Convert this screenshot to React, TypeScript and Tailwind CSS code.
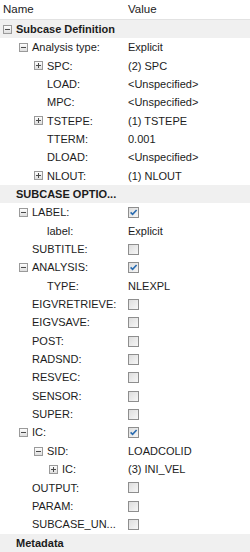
import React from "react";

type Row = {
  name: string;
  level: number;
  toggle?: "open" | "closed";
  value?: string;
  check?: boolean;
  section?: boolean;
};

const rows: Row[] = [
  { name: "Subcase Definition", level: 0, toggle: "open", section: true },
  { name: "Analysis type:", level: 1, toggle: "open", value: "Explicit" },
  { name: "SPC:", level: 2, toggle: "closed", value: "(2) SPC" },
  { name: "LOAD:", level: 2, value: "<Unspecified>" },
  { name: "MPC:", level: 2, value: "<Unspecified>" },
  { name: "TSTEPE:", level: 2, toggle: "closed", value: "(1) TSTEPE" },
  { name: "TTERM:", level: 2, value: "0.001" },
  { name: "DLOAD:", level: 2, value: "<Unspecified>" },
  { name: "NLOUT:", level: 2, toggle: "closed", value: "(1) NLOUT" },
  { name: "SUBCASE OPTIO...", level: 0, section: true },
  { name: "LABEL:", level: 1, toggle: "open", check: true },
  { name: "label:", level: 2, value: "Explicit" },
  { name: "SUBTITLE:", level: 1, check: false },
  { name: "ANALYSIS:", level: 1, toggle: "open", check: true },
  { name: "TYPE:", level: 2, value: "NLEXPL" },
  { name: "EIGVRETRIEVE:", level: 1, check: false },
  { name: "EIGVSAVE:", level: 1, check: false },
  { name: "POST:", level: 1, check: false },
  { name: "RADSND:", level: 1, check: false },
  { name: "RESVEC:", level: 1, check: false },
  { name: "SENSOR:", level: 1, check: false },
  { name: "SUPER:", level: 1, check: false },
  { name: "IC:", level: 1, toggle: "open", check: true },
  { name: "SID:", level: 2, toggle: "open", value: "LOADCOLID" },
  { name: "IC:", level: 3, toggle: "closed", value: "(3) INI_VEL" },
  { name: "OUTPUT:", level: 1, check: false },
  { name: "PARAM:", level: 1, check: false },
  { name: "SUBCASE_UN...", level: 1, check: false },
  { name: "Metadata", level: 0, section: true },
];

const indent = ["pl-[3px]", "pl-[19px]", "pl-[34px]", "pl-[49px]"];

const Toggle = ({ open }: { open: boolean }) => (
  <svg width="9" height="9" viewBox="0 0 9 9" className="shrink-0">
    <defs>
      <linearGradient id="tg" x1="0" y1="0" x2="0" y2="1">
        <stop offset="0" stopColor="#ffffff" />
        <stop offset="1" stopColor="#dcdcdc" />
      </linearGradient>
    </defs>
    <rect x="0.5" y="0.5" width="8" height="8" fill="url(#tg)" stroke="#9a9a9a" />
    <line x1="2" y1="4.5" x2="7" y2="4.5" stroke="#4a4a4a" />
    {!open && <line x1="4.5" y1="2" x2="4.5" y2="7" stroke="#4a4a4a" />}
  </svg>
);

const Check = ({ on }: { on: boolean }) => (
  <svg width="11" height="11" viewBox="0 0 11 11">
    <defs>
      <linearGradient id="cb" x1="0" y1="0" x2="1" y2="1">
        <stop offset="0" stopColor="#dcdcdc" />
        <stop offset="1" stopColor="#f8f8f8" />
      </linearGradient>
    </defs>
    <rect x="0.5" y="0.5" width="10" height="10" fill="url(#cb)" stroke="#8e8e8e" />
    {on && (
      <path d="M2.6 5.4 L4.6 7.4 L8.6 3" fill="none" stroke="#2a6cb0" strokeWidth="1.6" />
    )}
  </svg>
);

export default function App() {
  return (
    <div className="w-[250px] h-[552px] overflow-hidden bg-white text-[#1c1c1c] text-[11px] font-['Liberation_Sans',Arial,sans-serif]">
      <div className="flex items-center h-[20px] border-b border-[#e2e2e2] text-[11.5px] text-[#222]">
        <div className="w-[125px] pl-[3px]">Name</div>
        <div className="pl-[3px]">Value</div>
      </div>
      {rows.map((r, i) => (
        <div
          key={i}
          className={`flex items-center h-[18.35px] ${r.section ? "bg-[#f0f0f0] font-bold" : ""}`}
        >
          <div className={`w-[125px] shrink-0 flex items-center gap-[4px] whitespace-nowrap ${indent[r.level]}`}>
            {r.toggle ? <Toggle open={r.toggle === "open"} /> : <span className="w-[9px] shrink-0" />}
            <span>{r.name}</span>
          </div>
          <div className="pl-[3px] flex items-center whitespace-nowrap">
            {r.check !== undefined ? <Check on={r.check} /> : r.value}
          </div>
        </div>
      ))}
    </div>
  );
}
